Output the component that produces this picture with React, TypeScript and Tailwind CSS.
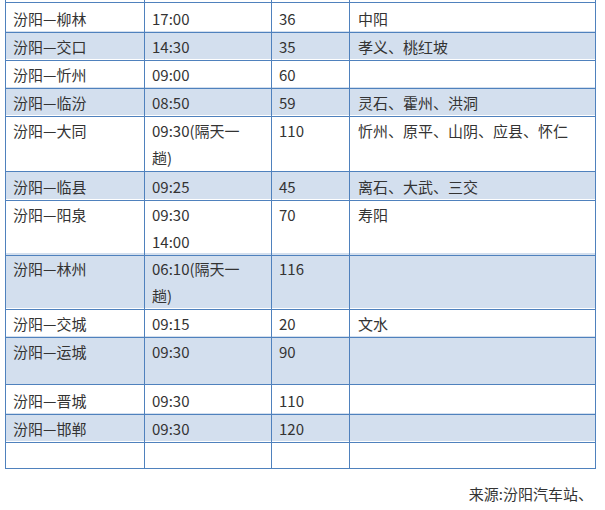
import React from "react";

type Row = {
  route: string;
  time: string[];
  price: string;
  via: string;
  h: number;
};

const ROWS: Row[] = [
  { route: "汾阳—柳林", time: ["17:00"], price: "36", via: "中阳", h: 28 },
  { route: "汾阳—交口", time: ["14:30"], price: "35", via: "孝义、桃红坡", h: 28 },
  { route: "汾阳—忻州", time: ["09:00"], price: "60", via: "", h: 28 },
  { route: "汾阳—临汾", time: ["08:50"], price: "59", via: "灵石、霍州、洪洞", h: 28 },
  { route: "汾阳—大同", time: ["09:30(隔天一", "趟)"], price: "110", via: "忻州、原平、山阴、应县、怀仁", h: 56 },
  { route: "汾阳—临县", time: ["09:25"], price: "45", via: "离石、大武、三交", h: 28 },
  { route: "汾阳—阳泉", time: ["09:30", "14:00"], price: "70", via: "寿阳", h: 54 },
  { route: "汾阳—林州", time: ["06:10(隔天一", "趟)"], price: "116", via: "", h: 55 },
  { route: "汾阳—交城", time: ["09:15"], price: "20", via: "文水", h: 28 },
  { route: "汾阳—运城", time: ["09:30"], price: "90", via: "", h: 49 },
  { route: "汾阳—晋城", time: ["09:30"], price: "110", via: "", h: 28 },
  { route: "汾阳—邯郸", time: ["09:30"], price: "120", via: "", h: 28 },
  { route: "", time: [], price: "", via: "", h: 28 },
];

const cell = "border-r border-b border-[#4f81bd] pl-[7px] pt-[2px] leading-[27px]";

export default function App() {
  return (
    <div
      className="w-[605px] h-[510px] bg-white text-[15px] text-[#333333] overflow-hidden"
      style={{ fontFamily: '"Noto Sans CJK SC", "Noto Sans", sans-serif' }}
    >
      <div className="ml-[5px] w-[591px] border-l border-[#4f81bd]">
        {/* tail of the row above, cut off by the screenshot */}
        <div className="grid grid-cols-[139px_127px_78px_246px] h-[3px]">
          <div className="border-r border-b border-[#4f81bd]" />
          <div className="border-r border-b border-[#4f81bd]" />
          <div className="border-r border-b border-[#4f81bd]" />
          <div className="border-r border-b border-[#4f81bd]" />
        </div>
        {ROWS.map((r, i) => (
          <div
            key={i}
            className={`grid grid-cols-[139px_127px_78px_246px] ${
              i % 2 === 1 ? "bg-[#d3dfee]" : "bg-white"
            }`}
            style={{ height: r.h }}
          >
            <div className={cell}>{r.route}</div>
            <div className={cell}>
              {r.time.map((t, j) => (
                <div key={j}>{t}</div>
              ))}
            </div>
            <div className={cell}>{r.price}</div>
            <div className={`${cell} pl-[8px]`}>{r.via}</div>
          </div>
        ))}
      </div>
      <div className="mt-[11px] pr-[12px] text-right leading-[27px]">
        来源:汾阳汽车站、
      </div>
    </div>
  );
}
